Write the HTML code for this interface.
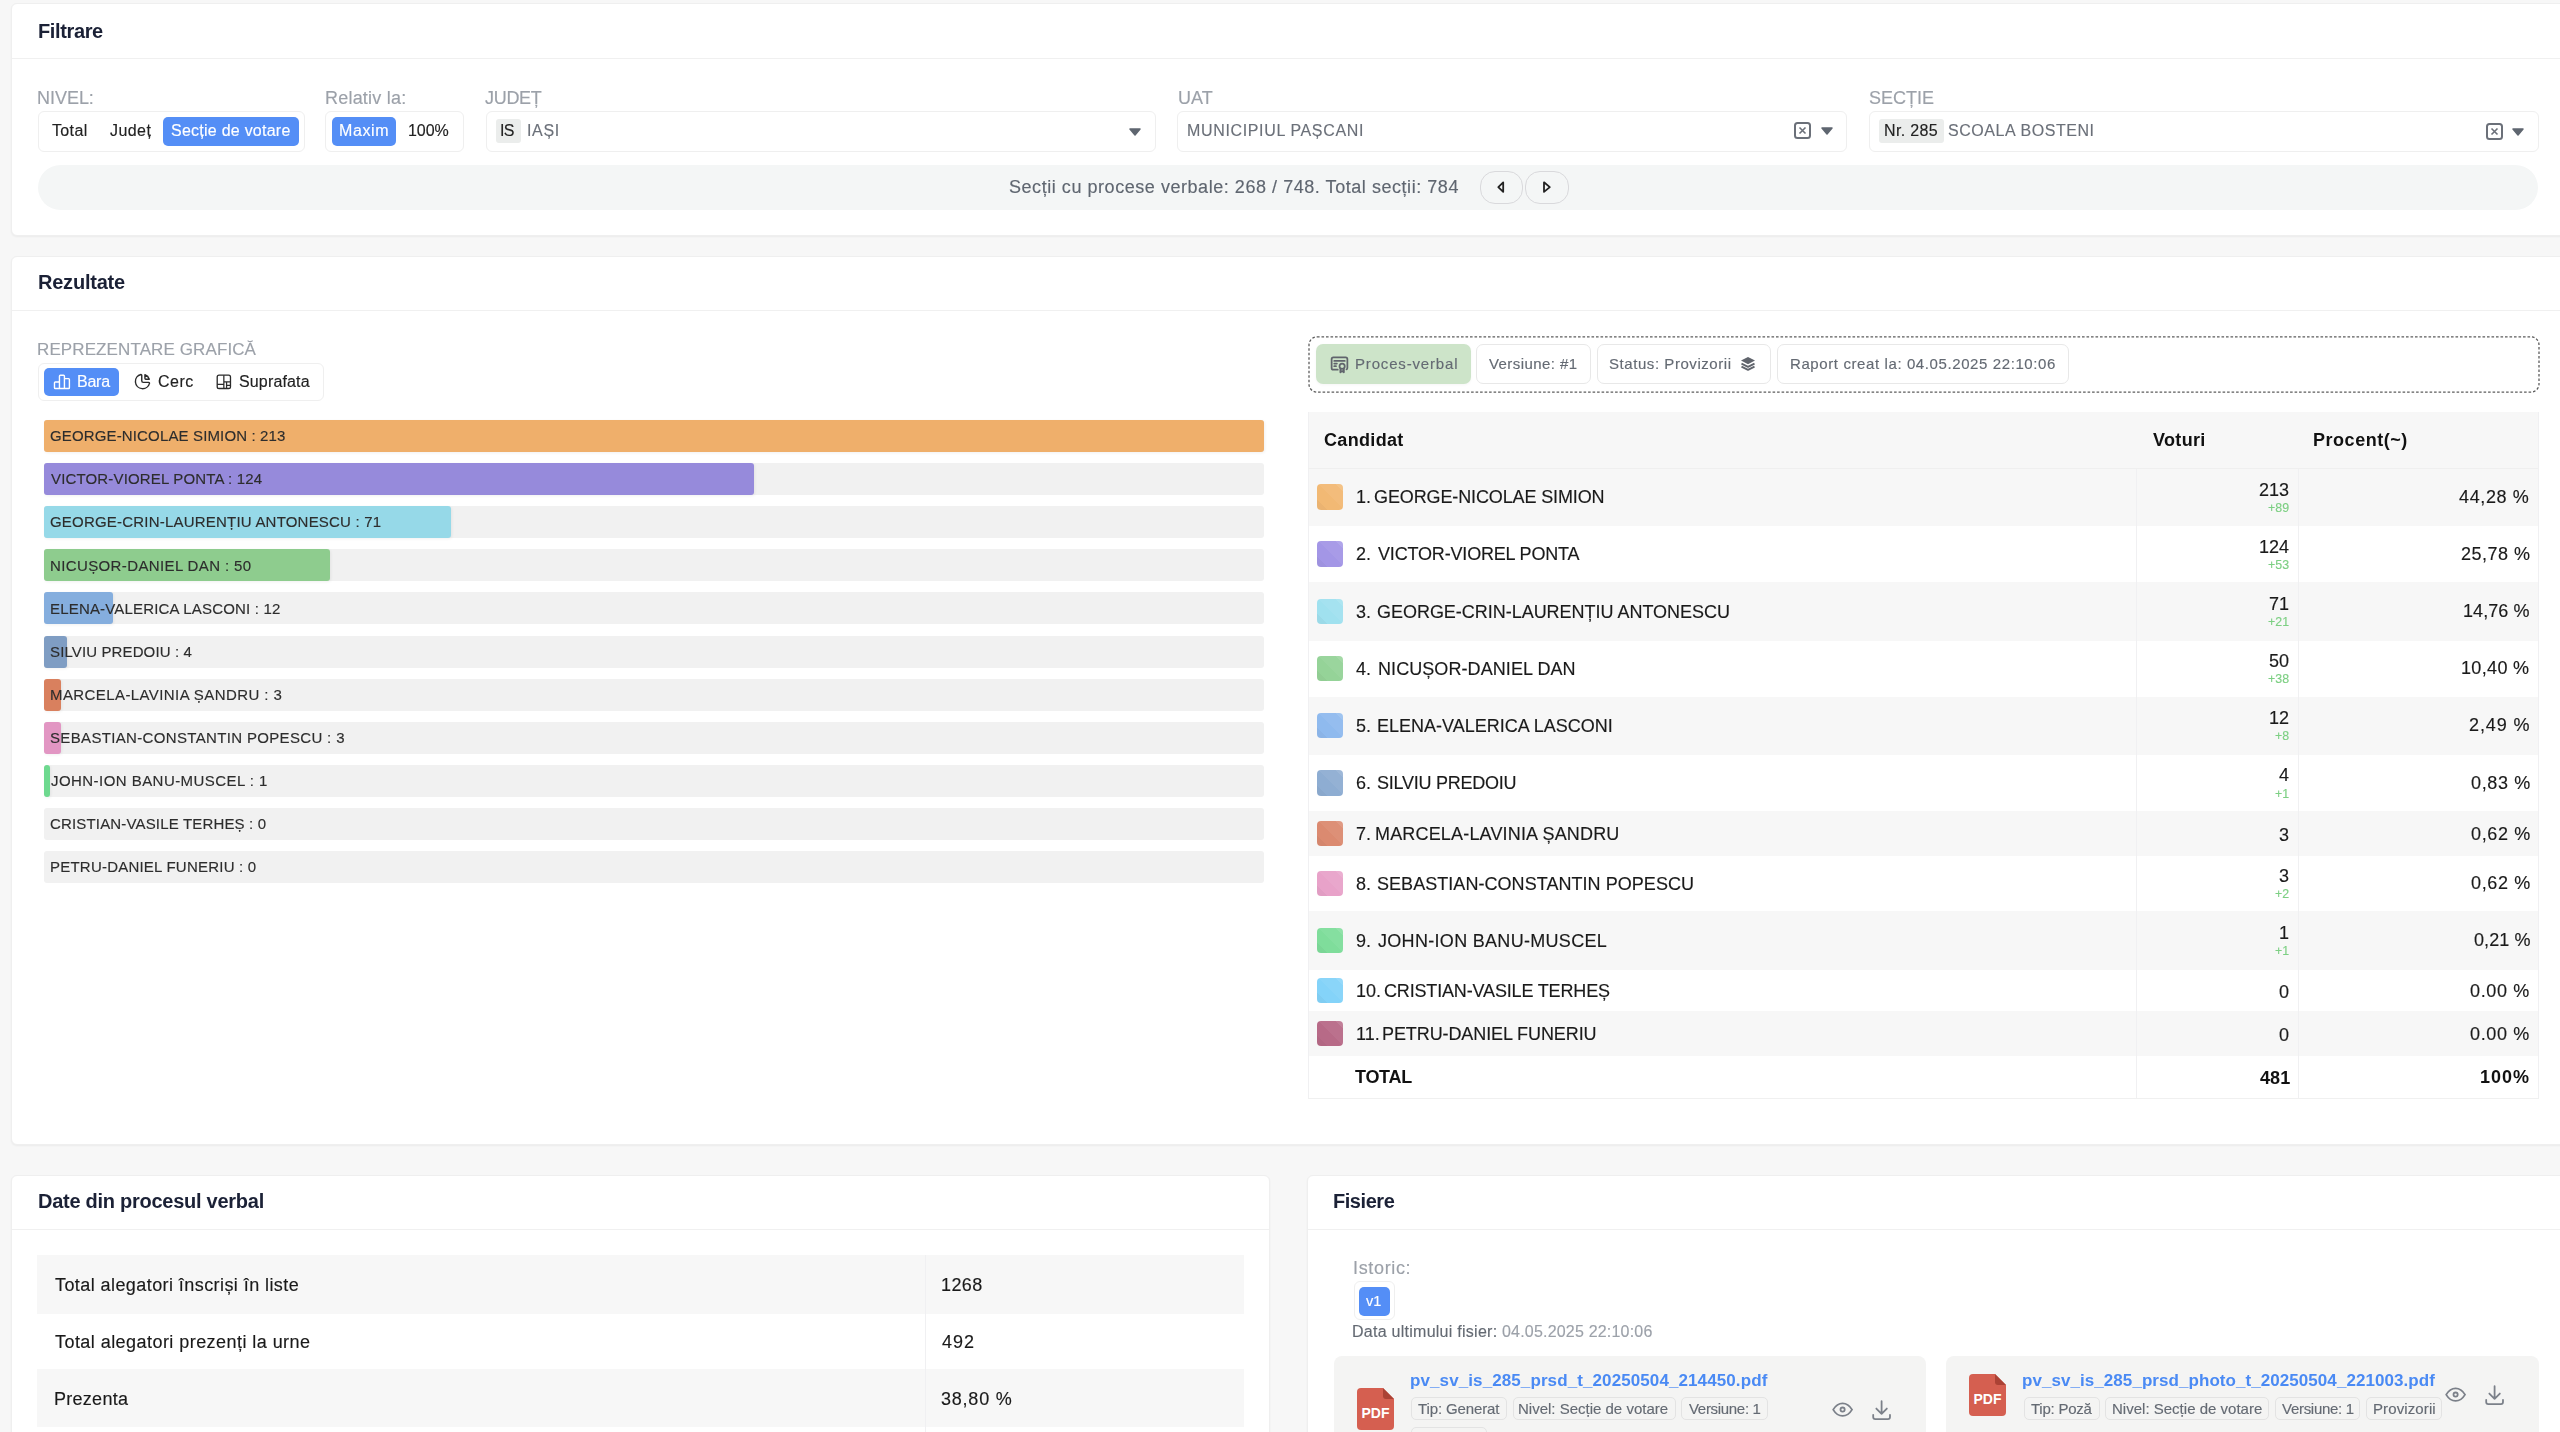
<!DOCTYPE html>
<html><head><meta charset="utf-8"><title>Rezultate</title>
<style>
html,body{margin:0;padding:0;}
body{width:2560px;height:1432px;overflow:hidden;background:#f7f7f7;position:relative;font-family:"Liberation Sans", sans-serif;}
.t{position:absolute;white-space:nowrap;font-family:"Liberation Sans", sans-serif;will-change:transform;-webkit-text-stroke:0.15px currentColor;}
.r{position:absolute;}
</style></head><body>
<div class="r" style="left:11px;top:3.4px;width:2561px;height:233.1px;background:#fff;border:1px solid #efefef;border-radius:6px;box-shadow:0 1px 2px rgba(0,0,0,0.05);box-sizing:border-box"></div>
<div class="r" style="left:12px;top:58px;width:2560px;height:1px;background:#f0f0f0"></div>
<span class="t" style="left:38.10px;top:20.77px;font-size:20px;line-height:20px;font-weight:700;color:#1b2136;letter-spacing:-0.371px;-webkit-text-stroke:0;">Filtrare</span>
<span class="t" style="left:37.25px;top:88.76px;font-size:18px;line-height:18px;font-weight:400;color:#9ca1a9;letter-spacing:-0.030px;">NIVEL:</span>
<span class="t" style="left:325.40px;top:88.76px;font-size:18px;line-height:18px;font-weight:400;color:#9ca1a9;letter-spacing:0.210px;">Relativ la:</span>
<span class="t" style="left:485.30px;top:88.76px;font-size:18px;line-height:18px;font-weight:400;color:#9ca1a9;letter-spacing:-0.300px;">JUDEȚ</span>
<span class="t" style="left:1177.50px;top:88.76px;font-size:18px;line-height:18px;font-weight:400;color:#9ca1a9;letter-spacing:0.000px;">UAT</span>
<span class="t" style="left:1869.00px;top:88.76px;font-size:18px;line-height:18px;font-weight:400;color:#9ca1a9;letter-spacing:0.000px;">SECȚIE</span>
<div class="r" style="left:38px;top:111px;width:267px;height:40.5px;border:1px solid #efefef;border-radius:6px;box-sizing:border-box"></div>
<div class="r" style="left:163px;top:117px;width:136px;height:29px;background:#548ef6;border-radius:5px"></div>
<span class="t" style="left:52.10px;top:122.76px;font-size:16px;line-height:16px;font-weight:400;color:#222;letter-spacing:0.350px;">Total</span>
<span class="t" style="left:109.60px;top:122.76px;font-size:16px;line-height:16px;font-weight:400;color:#222;letter-spacing:0.425px;">Județ</span>
<span class="t" style="left:171.30px;top:122.76px;font-size:16px;line-height:16px;font-weight:400;color:#fff;letter-spacing:0.247px;">Secție de votare</span>
<div class="r" style="left:325px;top:111px;width:139px;height:40.5px;border:1px solid #efefef;border-radius:6px;box-sizing:border-box"></div>
<div class="r" style="left:332px;top:117px;width:64px;height:29px;background:#548ef6;border-radius:5px"></div>
<span class="t" style="left:338.90px;top:122.76px;font-size:16px;line-height:16px;font-weight:400;color:#fff;letter-spacing:0.600px;">Maxim</span>
<span class="t" style="left:408.10px;top:122.76px;font-size:16px;line-height:16px;font-weight:400;color:#222;letter-spacing:-0.033px;">100%</span>
<div class="r" style="left:485.5px;top:111px;width:670.0px;height:40.5px;border:1px solid #efefef;border-radius:6px;box-sizing:border-box"></div>
<div class="r" style="left:496px;top:119px;width:25px;height:24px;background:#ebedec;border-radius:3px"></div>
<span class="t" style="left:500.10px;top:122.76px;font-size:16px;line-height:16px;font-weight:400;color:#222;letter-spacing:-0.600px;">IS</span>
<span class="t" style="left:526.80px;top:122.76px;font-size:16px;line-height:16px;font-weight:400;color:#6b7079;letter-spacing:0.633px;">IAȘI</span>
<svg class="r" style="left:1128.5px;top:127.5px;" width="12" height="8" viewBox="0 0 12 8" fill="none"><path d="M1 1 L11 1 L6 7 Z" fill="#5f6670" stroke="#5f6670" stroke-width="1.5" stroke-linejoin="round"/></svg>
<div class="r" style="left:1176.5px;top:111px;width:670.5px;height:40.5px;border:1px solid #efefef;border-radius:6px;box-sizing:border-box"></div>
<span class="t" style="left:1186.50px;top:122.76px;font-size:16px;line-height:16px;font-weight:400;color:#6b7079;letter-spacing:0.647px;">MUNICIPIUL PAȘCANI</span>
<svg class="r" style="left:1793.5px;top:122px;" width="17" height="17" viewBox="0 0 17 17" fill="none"><rect x="1" y="1" width="15" height="15" rx="2.5" stroke="#6b7079" stroke-width="2"/><path d="M5.5 5.5 L11.5 11.5 M11.5 5.5 L5.5 11.5" stroke="#6b7079" stroke-width="1.6"/></svg>
<svg class="r" style="left:1820.5px;top:127px;" width="12" height="8" viewBox="0 0 12 8" fill="none"><path d="M1 1 L11 1 L6 7 Z" fill="#5f6670" stroke="#5f6670" stroke-width="1.5" stroke-linejoin="round"/></svg>
<div class="r" style="left:1868.5px;top:111px;width:670.0px;height:40.5px;border:1px solid #efefef;border-radius:6px;box-sizing:border-box"></div>
<div class="r" style="left:1879px;top:119px;width:64.5px;height:24px;background:#ebedec;border-radius:3px"></div>
<span class="t" style="left:1884.40px;top:122.76px;font-size:16px;line-height:16px;font-weight:400;color:#222;letter-spacing:0.333px;">Nr. 285</span>
<span class="t" style="left:1948.40px;top:122.76px;font-size:16px;line-height:16px;font-weight:400;color:#6b7079;letter-spacing:0.562px;">SCOALA BOSTENI</span>
<svg class="r" style="left:2485.5px;top:122.5px;" width="17" height="17" viewBox="0 0 17 17" fill="none"><rect x="1" y="1" width="15" height="15" rx="2.5" stroke="#6b7079" stroke-width="2"/><path d="M5.5 5.5 L11.5 11.5 M11.5 5.5 L5.5 11.5" stroke="#6b7079" stroke-width="1.6"/></svg>
<svg class="r" style="left:2512px;top:127.5px;" width="12" height="8" viewBox="0 0 12 8" fill="none"><path d="M1 1 L11 1 L6 7 Z" fill="#5f6670" stroke="#5f6670" stroke-width="1.5" stroke-linejoin="round"/></svg>
<div class="r" style="left:38px;top:165px;width:2500px;height:45px;background:#f4f6f6;border-radius:23px"></div>
<span class="t" style="left:1009.20px;top:178.46px;font-size:18px;line-height:18px;font-weight:400;color:#5f6670;letter-spacing:0.546px;">Secții cu procese verbale: 268 / 748. Total secții: 784</span>
<div class="r" style="left:1480px;top:171px;width:42.5px;height:32.5px;border:1px solid #d9d9dc;border-radius:15px;box-sizing:border-box"></div>
<div class="r" style="left:1525px;top:171px;width:43.5px;height:32.5px;border:1px solid #d9d9dc;border-radius:15px;box-sizing:border-box"></div>
<svg class="r" style="left:1494px;top:179px;" width="14" height="16" viewBox="0 0 14 16" fill="none"><path d="M9.2 3.3 L4.3 8.1 L9.2 12.9 Z" stroke="#222" stroke-width="1.8" stroke-linejoin="round"/></svg>
<svg class="r" style="left:1539px;top:179px;" width="14" height="16" viewBox="0 0 14 16" fill="none"><path d="M5 3.3 L10.8 8.1 L5 12.9 Z" stroke="#222" stroke-width="1.8" stroke-linejoin="round"/></svg>
<div class="r" style="left:11px;top:255.5px;width:2561px;height:889.5px;background:#fff;border:1px solid #efefef;border-radius:6px;box-shadow:0 1px 2px rgba(0,0,0,0.05);box-sizing:border-box"></div>
<div class="r" style="left:12px;top:310px;width:2560px;height:1px;background:#f0f0f0"></div>
<span class="t" style="left:38.10px;top:272.17px;font-size:20px;line-height:20px;font-weight:700;color:#1b2136;letter-spacing:-0.225px;-webkit-text-stroke:0;">Rezultate</span>
<span class="t" style="left:37.30px;top:341.11px;font-size:17px;line-height:17px;font-weight:400;color:#9ca1a9;letter-spacing:0.105px;">REPREZENTARE GRAFICĂ</span>
<div class="r" style="left:38px;top:363px;width:286px;height:38px;border:1px solid #efefef;border-radius:6px;box-sizing:border-box"></div>
<div class="r" style="left:44px;top:368px;width:74.5px;height:28px;background:#548ef6;border-radius:5px"></div>
<svg class="r" style="left:51.9px;top:371.9px;" width="19.9" height="19.9" viewBox="0 0 24 24" fill="none"><path d="M3 13a1 1 0 0 1 1 -1h4a1 1 0 0 1 1 1v6a1 1 0 0 1 -1 1h-4a1 1 0 0 1 -1 -1z M15 9a1 1 0 0 1 1 -1h4a1 1 0 0 1 1 1v10a1 1 0 0 1 -1 1h-4a1 1 0 0 1 -1 -1z M9 5a1 1 0 0 1 1 -1h4a1 1 0 0 1 1 1v14a1 1 0 0 1 -1 1h-4a1 1 0 0 1 -1 -1z" stroke="#fff" stroke-width="1.7" stroke-linejoin="round"/></svg>
<span class="t" style="left:77.00px;top:374.46px;font-size:16px;line-height:16px;font-weight:400;color:#fff;letter-spacing:-0.233px;">Bara</span>
<svg class="r" style="left:132.5px;top:372.2px;" width="19.1" height="19.1" viewBox="0 0 24 24" fill="none"><path d="M10 3.2a9 9 0 1 0 10.8 10.8a1 1 0 0 0 -1 -1h-6.8a2 2 0 0 1 -2 -2v-7a.9 .9 0 0 0 -1 -.8" stroke="#2b2b2b" stroke-width="1.8" stroke-linecap="round" stroke-linejoin="round"/><path d="M15 3.5a9 9 0 0 1 5.5 5.5h-4.5a1 1 0 0 1 -1 -1v-4.5" stroke="#2b2b2b" stroke-width="1.8" stroke-linecap="round" stroke-linejoin="round"/></svg>
<span class="t" style="left:157.60px;top:374.46px;font-size:16px;line-height:16px;font-weight:400;color:#222;letter-spacing:0.467px;">Cerc</span>
<svg class="r" style="left:215px;top:372.7px;" width="17.7" height="17.7" viewBox="0 0 24 24" fill="none"><rect x="3" y="3" width="18" height="18" rx="2.5" stroke="#2b2b2b" stroke-width="1.8"/><path d="M12 3v18 M3 15.6h9 M12 12h9 M15.7 12v9 M15.7 16.8h5.3" stroke="#2b2b2b" stroke-width="1.7"/></svg>
<span class="t" style="left:238.60px;top:374.46px;font-size:16px;line-height:16px;font-weight:400;color:#222;letter-spacing:0.150px;">Suprafata</span>
<div class="r" style="left:44px;top:420.0px;width:1219.5px;height:32.0px;background:#f1f1f1;border-radius:3px"></div>
<div class="r" style="left:44px;top:420.0px;width:1219.5px;height:32.0px;background:#efaf6b;border-radius:3px;box-shadow:1px 1px 3px rgba(0,0,0,0.06)"></div>
<span class="t" style="left:50.20px;top:428.20px;font-size:15px;line-height:15px;font-weight:400;color:#2d2d2d;letter-spacing:0.142px;">GEORGE-NICOLAE SIMION : 213</span>
<div class="r" style="left:44px;top:463.1px;width:1219.5px;height:32.0px;background:#f1f1f1;border-radius:3px"></div>
<div class="r" style="left:44px;top:463.1px;width:709.943661971831px;height:32.0px;background:#968adb;border-radius:3px;box-shadow:1px 1px 3px rgba(0,0,0,0.06)"></div>
<span class="t" style="left:51.20px;top:471.30px;font-size:15px;line-height:15px;font-weight:400;color:#2d2d2d;letter-spacing:0.158px;">VICTOR-VIOREL PONTA : 124</span>
<div class="r" style="left:44px;top:506.2px;width:1219.5px;height:32.00000000000006px;background:#f1f1f1;border-radius:3px"></div>
<div class="r" style="left:44px;top:506.2px;width:406.5px;height:32.00000000000006px;background:#96d9e8;border-radius:3px;box-shadow:1px 1px 3px rgba(0,0,0,0.06)"></div>
<span class="t" style="left:50.20px;top:514.40px;font-size:15px;line-height:15px;font-weight:400;color:#2d2d2d;letter-spacing:0.206px;">GEORGE-CRIN-LAURENȚIU ANTONESCU : 71</span>
<div class="r" style="left:44px;top:549.3px;width:1219.5px;height:32.0px;background:#f1f1f1;border-radius:3px"></div>
<div class="r" style="left:44px;top:549.3px;width:286.2676056338028px;height:32.0px;background:#8ecc8e;border-radius:3px;box-shadow:1px 1px 3px rgba(0,0,0,0.06)"></div>
<span class="t" style="left:50.20px;top:557.50px;font-size:15px;line-height:15px;font-weight:400;color:#2d2d2d;letter-spacing:0.377px;">NICUȘOR-DANIEL DAN : 50</span>
<div class="r" style="left:44px;top:592.4px;width:1219.5px;height:32.0px;background:#f1f1f1;border-radius:3px"></div>
<div class="r" style="left:44px;top:592.4px;width:68.70422535211267px;height:32.0px;background:#85aede;border-radius:3px;box-shadow:1px 1px 3px rgba(0,0,0,0.06)"></div>
<span class="t" style="left:50.20px;top:600.60px;font-size:15px;line-height:15px;font-weight:400;color:#2d2d2d;letter-spacing:0.181px;">ELENA-VALERICA LASCONI : 12</span>
<div class="r" style="left:44px;top:635.5px;width:1219.5px;height:32.0px;background:#f1f1f1;border-radius:3px"></div>
<div class="r" style="left:44px;top:635.5px;width:22.901408450704224px;height:32.0px;background:#7f9dc3;border-radius:3px;box-shadow:1px 1px 3px rgba(0,0,0,0.06)"></div>
<span class="t" style="left:50.20px;top:643.70px;font-size:15px;line-height:15px;font-weight:400;color:#2d2d2d;letter-spacing:0.124px;">SILVIU PREDOIU : 4</span>
<div class="r" style="left:44px;top:678.6px;width:1219.5px;height:32.0px;background:#f1f1f1;border-radius:3px"></div>
<div class="r" style="left:44px;top:678.6px;width:17.176056338028168px;height:32.0px;background:#d9805e;border-radius:3px;box-shadow:1px 1px 3px rgba(0,0,0,0.06)"></div>
<span class="t" style="left:50.20px;top:686.80px;font-size:15px;line-height:15px;font-weight:400;color:#2d2d2d;letter-spacing:0.412px;">MARCELA-LAVINIA ȘANDRU : 3</span>
<div class="r" style="left:44px;top:721.7px;width:1219.5px;height:32.0px;background:#f1f1f1;border-radius:3px"></div>
<div class="r" style="left:44px;top:721.7px;width:17.176056338028168px;height:32.0px;background:#e296c3;border-radius:3px;box-shadow:1px 1px 3px rgba(0,0,0,0.06)"></div>
<span class="t" style="left:50.20px;top:729.90px;font-size:15px;line-height:15px;font-weight:400;color:#2d2d2d;letter-spacing:0.340px;">SEBASTIAN-CONSTANTIN POPESCU : 3</span>
<div class="r" style="left:44px;top:764.8px;width:1219.5px;height:32.0px;background:#f1f1f1;border-radius:3px"></div>
<div class="r" style="left:44px;top:764.8px;width:5.725352112676056px;height:32.0px;background:#6ed98f;border-radius:3px;box-shadow:1px 1px 3px rgba(0,0,0,0.06)"></div>
<span class="t" style="left:51.20px;top:773.00px;font-size:15px;line-height:15px;font-weight:400;color:#2d2d2d;letter-spacing:0.448px;">JOHN-ION BANU-MUSCEL : 1</span>
<div class="r" style="left:44px;top:807.9000000000001px;width:1219.5px;height:32.0px;background:#f1f1f1;border-radius:3px"></div>
<span class="t" style="left:50.20px;top:816.10px;font-size:15px;line-height:15px;font-weight:400;color:#2d2d2d;letter-spacing:0.162px;">CRISTIAN-VASILE TERHEȘ : 0</span>
<div class="r" style="left:44px;top:851.0px;width:1219.5px;height:32.0px;background:#f1f1f1;border-radius:3px"></div>
<span class="t" style="left:50.20px;top:859.20px;font-size:15px;line-height:15px;font-weight:400;color:#2d2d2d;letter-spacing:0.220px;">PETRU-DANIEL FUNERIU : 0</span>
<svg class="r" style="left:1307.5px;top:336px;" width="1232" height="57" viewBox="0 0 1232 57" fill="none"><rect x="1" y="0.9" width="1230" height="55.2" rx="8" stroke="#5c5c5c" stroke-width="1.3" stroke-dasharray="2.6 1.9"/></svg>
<div class="r" style="left:1316px;top:344px;width:154.5px;height:40px;background:#cde4c9;border-radius:7px;box-shadow:0 1px 3px rgba(0,0,0,0.04)"></div>
<svg class="r" style="left:1328.5px;top:353px;" width="21" height="21" viewBox="0 0 24 24" fill="none"><path d="M12 15a3 3 0 1 0 6 0a3 3 0 1 0 -6 0 M13 17.5v4.5l2 -1.5l2 1.5v-4.5 M10 19h-5a2 2 0 0 1 -2 -2v-10c0 -1.1 .9 -2 2 -2h14a2 2 0 0 1 2 2v10a2 2 0 0 1 -1 1.73 M6 9l12 0 M6 12l3 0 M6 15l2 0" stroke="#60646c" stroke-width="2" stroke-linecap="round" stroke-linejoin="round"/></svg>
<span class="t" style="left:1355.00px;top:356.20px;font-size:15px;line-height:15px;font-weight:400;color:#646a73;letter-spacing:0.833px;">Proces-verbal</span>
<div class="r" style="left:1475.5px;top:344px;width:115.0px;height:40px;background:#fff;border:1px solid #e8e8e8;border-radius:7px;box-sizing:border-box"></div>
<span class="t" style="left:1489.10px;top:356.20px;font-size:15px;line-height:15px;font-weight:400;color:#646a73;letter-spacing:0.418px;">Versiune: #1</span>
<div class="r" style="left:1596.5px;top:344px;width:174.0px;height:40px;background:#fff;border:1px solid #e8e8e8;border-radius:7px;box-sizing:border-box"></div>
<span class="t" style="left:1609.00px;top:356.20px;font-size:15px;line-height:15px;font-weight:400;color:#646a73;letter-spacing:0.559px;">Status: Provizorii</span>
<svg class="r" style="left:1740px;top:355.5px;" width="16" height="15" viewBox="0 0 16 15" fill="none"><path d="M8 1 L15 4.6 L8 8.2 L1 4.6 Z" fill="#60646c"/><path d="M1.5 7.6 L8 10.9 L14.5 7.6" stroke="#60646c" stroke-width="1.8" stroke-linejoin="round"/><path d="M1.5 10.6 L8 13.9 L14.5 10.6" stroke="#60646c" stroke-width="1.8" stroke-linejoin="round"/></svg>
<div class="r" style="left:1777px;top:344px;width:291.5px;height:40px;background:#fff;border:1px solid #e8e8e8;border-radius:7px;box-sizing:border-box"></div>
<span class="t" style="left:1789.60px;top:356.20px;font-size:15px;line-height:15px;font-weight:400;color:#646a73;letter-spacing:0.600px;">Raport creat la: 04.05.2025 22:10:06</span>
<div class="r" style="left:1308px;top:411.7px;width:1231px;height:56.60000000000002px;background:#f7f7f7"></div>
<span class="t" style="left:1323.80px;top:430.86px;font-size:18px;line-height:18px;font-weight:700;color:#111;letter-spacing:0.329px;-webkit-text-stroke:0;">Candidat</span>
<span class="t" style="left:2152.60px;top:430.86px;font-size:18px;line-height:18px;font-weight:700;color:#111;letter-spacing:0.340px;-webkit-text-stroke:0;">Voturi</span>
<span class="t" style="left:2313.00px;top:430.86px;font-size:18px;line-height:18px;font-weight:700;color:#111;letter-spacing:0.533px;-webkit-text-stroke:0;">Procent(~)</span>
<div class="r" style="left:1308px;top:468.3px;width:1231px;height:57.69999999999999px;background:#f7f7f7"></div>
<div class="r" style="left:1308px;top:526px;width:1231px;height:56.299999999999955px;background:#ffffff"></div>
<div class="r" style="left:1308px;top:582.3px;width:1231px;height:58.40000000000009px;background:#f7f7f7"></div>
<div class="r" style="left:1308px;top:640.7px;width:1231px;height:56.0px;background:#ffffff"></div>
<div class="r" style="left:1308px;top:696.7px;width:1231px;height:58.09999999999991px;background:#f7f7f7"></div>
<div class="r" style="left:1308px;top:754.8px;width:1231px;height:56.200000000000045px;background:#ffffff"></div>
<div class="r" style="left:1308px;top:811px;width:1231px;height:45px;background:#f7f7f7"></div>
<div class="r" style="left:1308px;top:856px;width:1231px;height:55px;background:#ffffff"></div>
<div class="r" style="left:1308px;top:911px;width:1231px;height:58.799999999999955px;background:#f7f7f7"></div>
<div class="r" style="left:1308px;top:969.8px;width:1231px;height:41.40000000000009px;background:#ffffff"></div>
<div class="r" style="left:1308px;top:1011.2px;width:1231px;height:44.399999999999864px;background:#f7f7f7"></div>
<div class="r" style="left:1308px;top:1055.6px;width:1231px;height:42.100000000000136px;background:#ffffff"></div>
<div class="r" style="left:1308px;top:411.7px;width:1px;height:686.0px;background:#f0f0f2"></div>
<div class="r" style="left:2136px;top:468.3px;width:1px;height:629.4000000000001px;background:#f0f0f2"></div>
<div class="r" style="left:2297.5px;top:468.3px;width:1.0px;height:629.4000000000001px;background:#f0f0f2"></div>
<div class="r" style="left:1308px;top:468px;width:1231px;height:1px;background:#efefef"></div>
<div class="r" style="left:2538px;top:411.7px;width:1px;height:686.0px;background:#f0f0f2"></div>
<div class="r" style="left:1308px;top:1097.7px;width:1231px;height:1.0px;background:#f0f0f0"></div>
<div class="r" style="left:1317px;top:484.45px;width:25.59999999999991px;height:25.399999999999977px;background:linear-gradient(45deg,#ebb371 0 20%,#f2b974 20% 52%,#f3bc7b 52% 86%,#f4c387 86%);border-radius:4px"></div>
<span class="t" style="left:1355.50px;top:488.31px;font-size:18px;line-height:18px;font-weight:400;color:#1a1a1a;letter-spacing:0.000px;">1.</span>
<span class="t" style="left:1373.60px;top:488.31px;font-size:18px;line-height:18px;font-weight:400;color:#1a1a1a;letter-spacing:-0.125px;">GEORGE-NICOLAE SIMION</span>
<span class="t" style="right:271.00px;top:480.71px;font-size:18px;line-height:18px;font-weight:400;color:#1a1a1a;letter-spacing:0.000px;">213</span>
<span class="t" style="right:271.00px;top:501.75px;font-size:12.4px;line-height:12.4px;font-weight:400;color:#7dcf83;letter-spacing:0.000px;">+89</span>
<span class="t" style="right:30.97px;top:487.81px;font-size:18px;line-height:18px;font-weight:400;color:#1a1a1a;letter-spacing:0.633px;">44,28 %</span>
<div class="r" style="left:1317px;top:541.4499999999999px;width:25.59999999999991px;height:25.40000000000009px;background:linear-gradient(45deg,#9e92df 0 20%,#a396e6 20% 52%,#a89be7 52% 86%,#b0a5ea 86%);border-radius:4px"></div>
<span class="t" style="left:1355.50px;top:545.31px;font-size:18px;line-height:18px;font-weight:400;color:#1a1a1a;letter-spacing:0.000px;">2.</span>
<span class="t" style="left:1378.20px;top:545.31px;font-size:18px;line-height:18px;font-weight:400;color:#1a1a1a;letter-spacing:-0.172px;">VICTOR-VIOREL PONTA</span>
<span class="t" style="right:271.00px;top:537.71px;font-size:18px;line-height:18px;font-weight:400;color:#1a1a1a;letter-spacing:0.000px;">124</span>
<span class="t" style="right:271.00px;top:558.75px;font-size:12.4px;line-height:12.4px;font-weight:400;color:#7dcf83;letter-spacing:0.000px;">+53</span>
<span class="t" style="right:30.12px;top:544.81px;font-size:18px;line-height:18px;font-weight:400;color:#1a1a1a;letter-spacing:0.475px;">25,78 %</span>
<div class="r" style="left:1317px;top:598.8px;width:25.59999999999991px;height:25.40000000000009px;background:linear-gradient(45deg,#9bdae8 0 20%,#a0e1ef 20% 52%,#a5e2f0 52% 86%,#ade5f1 86%);border-radius:4px"></div>
<span class="t" style="left:1355.50px;top:602.66px;font-size:18px;line-height:18px;font-weight:400;color:#1a1a1a;letter-spacing:0.000px;">3.</span>
<span class="t" style="left:1377.00px;top:602.66px;font-size:18px;line-height:18px;font-weight:400;color:#1a1a1a;letter-spacing:-0.027px;">GEORGE-CRIN-LAURENȚIU ANTONESCU</span>
<span class="t" style="right:271.00px;top:595.06px;font-size:18px;line-height:18px;font-weight:400;color:#1a1a1a;letter-spacing:0.000px;">71</span>
<span class="t" style="right:271.00px;top:616.10px;font-size:12.4px;line-height:12.4px;font-weight:400;color:#7dcf83;letter-spacing:0.000px;">+21</span>
<span class="t" style="right:30.55px;top:602.16px;font-size:18px;line-height:18px;font-weight:400;color:#1a1a1a;letter-spacing:0.056px;">14,76 %</span>
<div class="r" style="left:1317px;top:656.0px;width:25.59999999999991px;height:25.40000000000009px;background:linear-gradient(45deg,#91cd93 0 20%,#95d398 20% 52%,#9ad59d 52% 86%,#a4d9a6 86%);border-radius:4px"></div>
<span class="t" style="left:1355.50px;top:659.86px;font-size:18px;line-height:18px;font-weight:400;color:#1a1a1a;letter-spacing:0.000px;">4.</span>
<span class="t" style="left:1377.50px;top:659.86px;font-size:18px;line-height:18px;font-weight:400;color:#1a1a1a;letter-spacing:0.074px;">NICUȘOR-DANIEL DAN</span>
<span class="t" style="right:271.00px;top:652.26px;font-size:18px;line-height:18px;font-weight:400;color:#1a1a1a;letter-spacing:0.000px;">50</span>
<span class="t" style="right:271.00px;top:673.30px;font-size:12.4px;line-height:12.4px;font-weight:400;color:#7dcf83;letter-spacing:0.000px;">+38</span>
<span class="t" style="right:30.43px;top:659.36px;font-size:18px;line-height:18px;font-weight:400;color:#1a1a1a;letter-spacing:0.337px;">10,40 %</span>
<div class="r" style="left:1317px;top:713.05px;width:25.59999999999991px;height:25.40000000000009px;background:linear-gradient(45deg,#8bb4e7 0 20%,#8fbaee 20% 52%,#95bdef 52% 86%,#9fc4f0 86%);border-radius:4px"></div>
<span class="t" style="left:1355.50px;top:716.91px;font-size:18px;line-height:18px;font-weight:400;color:#1a1a1a;letter-spacing:0.000px;">5.</span>
<span class="t" style="left:1377.00px;top:716.91px;font-size:18px;line-height:18px;font-weight:400;color:#1a1a1a;letter-spacing:0.000px;">ELENA-VALERICA LASCONI</span>
<span class="t" style="right:271.00px;top:709.31px;font-size:18px;line-height:18px;font-weight:400;color:#1a1a1a;letter-spacing:0.000px;">12</span>
<span class="t" style="right:271.00px;top:730.35px;font-size:12.4px;line-height:12.4px;font-weight:400;color:#7dcf83;letter-spacing:0.000px;">+8</span>
<span class="t" style="right:29.90px;top:716.41px;font-size:18px;line-height:18px;font-weight:400;color:#1a1a1a;letter-spacing:0.872px;">2,49 %</span>
<div class="r" style="left:1317px;top:770.1999999999999px;width:25.59999999999991px;height:25.40000000000009px;background:linear-gradient(45deg,#8aa8cc 0 20%,#8eadd2 20% 52%,#94b1d4 52% 86%,#9eb8d8 86%);border-radius:4px"></div>
<span class="t" style="left:1355.50px;top:774.06px;font-size:18px;line-height:18px;font-weight:400;color:#1a1a1a;letter-spacing:0.000px;">6.</span>
<span class="t" style="left:1377.40px;top:774.06px;font-size:18px;line-height:18px;font-weight:400;color:#1a1a1a;letter-spacing:-0.246px;">SILVIU PREDOIU</span>
<span class="t" style="right:271.00px;top:766.46px;font-size:18px;line-height:18px;font-weight:400;color:#1a1a1a;letter-spacing:0.000px;">4</span>
<span class="t" style="right:271.00px;top:787.50px;font-size:12.4px;line-height:12.4px;font-weight:400;color:#7dcf83;letter-spacing:0.000px;">+1</span>
<span class="t" style="right:29.11px;top:773.56px;font-size:18px;line-height:18px;font-weight:400;color:#1a1a1a;letter-spacing:0.638px;">0,83 %</span>
<div class="r" style="left:1317px;top:820.8px;width:25.59999999999991px;height:25.40000000000009px;background:linear-gradient(45deg,#d4866d 0 20%,#db8a70 20% 52%,#dd9077 52% 86%,#e09a84 86%);border-radius:4px"></div>
<span class="t" style="left:1355.50px;top:824.66px;font-size:18px;line-height:18px;font-weight:400;color:#1a1a1a;letter-spacing:0.000px;">7.</span>
<span class="t" style="left:1374.80px;top:824.66px;font-size:18px;line-height:18px;font-weight:400;color:#1a1a1a;letter-spacing:0.171px;">MARCELA-LAVINIA ȘANDRU</span>
<span class="t" style="right:271.00px;top:826.26px;font-size:18px;line-height:18px;font-weight:400;color:#1a1a1a;letter-spacing:0.000px;">3</span>
<span class="t" style="right:29.11px;top:825.26px;font-size:18px;line-height:18px;font-weight:400;color:#1a1a1a;letter-spacing:0.638px;">0,62 %</span>
<div class="r" style="left:1317px;top:870.8px;width:25.59999999999991px;height:25.40000000000009px;background:linear-gradient(45deg,#e19dc3 0 20%,#e8a2c9 20% 52%,#e9a7cc 52% 86%,#ebafd1 86%);border-radius:4px"></div>
<span class="t" style="left:1355.50px;top:874.66px;font-size:18px;line-height:18px;font-weight:400;color:#1a1a1a;letter-spacing:0.000px;">8.</span>
<span class="t" style="left:1377.40px;top:874.66px;font-size:18px;line-height:18px;font-weight:400;color:#1a1a1a;letter-spacing:0.048px;">SEBASTIAN-CONSTANTIN POPESCU</span>
<span class="t" style="right:271.00px;top:867.06px;font-size:18px;line-height:18px;font-weight:400;color:#1a1a1a;letter-spacing:0.000px;">3</span>
<span class="t" style="right:271.00px;top:888.10px;font-size:12.4px;line-height:12.4px;font-weight:400;color:#7dcf83;letter-spacing:0.000px;">+2</span>
<span class="t" style="right:29.11px;top:874.16px;font-size:18px;line-height:18px;font-weight:400;color:#1a1a1a;letter-spacing:0.638px;">0,62 %</span>
<div class="r" style="left:1317px;top:927.6999999999999px;width:25.59999999999991px;height:25.40000000000009px;background:linear-gradient(45deg,#7bd696 0 20%,#7fdd9b 20% 52%,#85dfa0 52% 86%,#91e2a9 86%);border-radius:4px"></div>
<span class="t" style="left:1355.50px;top:931.56px;font-size:18px;line-height:18px;font-weight:400;color:#1a1a1a;letter-spacing:0.000px;">9.</span>
<span class="t" style="left:1378.40px;top:931.56px;font-size:18px;line-height:18px;font-weight:400;color:#1a1a1a;letter-spacing:0.305px;">JOHN-ION BANU-MUSCEL</span>
<span class="t" style="right:271.00px;top:923.96px;font-size:18px;line-height:18px;font-weight:400;color:#1a1a1a;letter-spacing:0.000px;">1</span>
<span class="t" style="right:271.00px;top:945.00px;font-size:12.4px;line-height:12.4px;font-weight:400;color:#7dcf83;letter-spacing:0.000px;">+1</span>
<span class="t" style="right:29.68px;top:931.06px;font-size:18px;line-height:18px;font-weight:400;color:#1a1a1a;letter-spacing:0.072px;">0,21 %</span>
<div class="r" style="left:1317px;top:977.8px;width:25.59999999999991px;height:25.40000000000009px;background:linear-gradient(45deg,#80cdf2 0 20%,#84d3f9 20% 52%,#8ad5f9 52% 86%,#95d9fa 86%);border-radius:4px"></div>
<span class="t" style="left:1355.50px;top:981.66px;font-size:18px;line-height:18px;font-weight:400;color:#1a1a1a;letter-spacing:0.000px;">10.</span>
<span class="t" style="left:1384.40px;top:981.66px;font-size:18px;line-height:18px;font-weight:400;color:#1a1a1a;letter-spacing:-0.162px;">CRISTIAN-VASILE TERHEȘ</span>
<span class="t" style="right:271.00px;top:983.26px;font-size:18px;line-height:18px;font-weight:400;color:#1a1a1a;letter-spacing:0.000px;">0</span>
<span class="t" style="right:30.14px;top:982.26px;font-size:18px;line-height:18px;font-weight:400;color:#1a1a1a;letter-spacing:0.660px;">0.00 %</span>
<div class="r" style="left:1317px;top:1020.7px;width:25.59999999999991px;height:25.40000000000009px;background:linear-gradient(45deg,#b26783 0 20%,#b76a87 20% 52%,#bb718d 52% 86%,#c17f98 86%);border-radius:4px"></div>
<span class="t" style="left:1355.50px;top:1024.56px;font-size:18px;line-height:18px;font-weight:400;color:#1a1a1a;letter-spacing:0.000px;">11.</span>
<span class="t" style="left:1381.60px;top:1024.56px;font-size:18px;line-height:18px;font-weight:400;color:#1a1a1a;letter-spacing:-0.095px;">PETRU-DANIEL FUNERIU</span>
<span class="t" style="right:271.00px;top:1026.16px;font-size:18px;line-height:18px;font-weight:400;color:#1a1a1a;letter-spacing:0.000px;">0</span>
<span class="t" style="right:30.14px;top:1025.16px;font-size:18px;line-height:18px;font-weight:400;color:#1a1a1a;letter-spacing:0.660px;">0.00 %</span>
<span class="t" style="left:1355.40px;top:1068.26px;font-size:18px;line-height:18px;font-weight:700;color:#111;letter-spacing:-0.275px;-webkit-text-stroke:0;">TOTAL</span>
<span class="t" style="right:269.90px;top:1069.36px;font-size:18px;line-height:18px;font-weight:700;color:#111;letter-spacing:0.100px;-webkit-text-stroke:0;">481</span>
<span class="t" style="right:29.80px;top:1067.96px;font-size:18px;line-height:18px;font-weight:700;color:#111;letter-spacing:1.000px;-webkit-text-stroke:0;">100%</span>
<div class="r" style="left:11px;top:1174.5px;width:1258.5px;height:325.5px;background:#fff;border:1px solid #efefef;border-radius:6px;box-shadow:0 1px 2px rgba(0,0,0,0.05);box-sizing:border-box"></div>
<div class="r" style="left:12px;top:1228.5px;width:1257px;height:1.0px;background:#f0f0f0"></div>
<span class="t" style="left:38.10px;top:1190.57px;font-size:20px;line-height:20px;font-weight:700;color:#1b2136;letter-spacing:-0.265px;-webkit-text-stroke:0;">Date din procesul verbal</span>
<div class="r" style="left:37px;top:1255px;width:1207px;height:58.90000000000009px;background:#f7f7f7"></div>
<span class="t" style="left:55.20px;top:1276.01px;font-size:18px;line-height:18px;font-weight:400;color:#1a1a1a;letter-spacing:0.425px;">Total alegatori înscriși în liste</span>
<span class="t" style="left:941.00px;top:1276.01px;font-size:18px;line-height:18px;font-weight:400;color:#1a1a1a;letter-spacing:0.367px;">1268</span>
<div class="r" style="left:37px;top:1313.9px;width:1207px;height:55.299999999999955px;background:#ffffff"></div>
<span class="t" style="left:55.20px;top:1333.11px;font-size:18px;line-height:18px;font-weight:400;color:#1a1a1a;letter-spacing:0.448px;">Total alegatori prezenți la urne</span>
<span class="t" style="left:942.00px;top:1333.11px;font-size:18px;line-height:18px;font-weight:400;color:#1a1a1a;letter-spacing:1.000px;">492</span>
<div class="r" style="left:37px;top:1369.2px;width:1207px;height:57.799999999999955px;background:#f7f7f7"></div>
<span class="t" style="left:54.20px;top:1389.66px;font-size:18px;line-height:18px;font-weight:400;color:#1a1a1a;letter-spacing:0.271px;">Prezenta</span>
<span class="t" style="left:941.00px;top:1389.66px;font-size:18px;line-height:18px;font-weight:400;color:#1a1a1a;letter-spacing:0.783px;">38,80 %</span>
<div class="r" style="left:37px;top:1427px;width:1207px;height:58px;background:#ffffff"></div>
<div class="r" style="left:925px;top:1255px;width:1px;height:245px;background:#f0f0f2"></div>
<div class="r" style="left:1307px;top:1174.5px;width:1265px;height:325.5px;background:#fff;border:1px solid #efefef;border-radius:6px;box-shadow:0 1px 2px rgba(0,0,0,0.05);box-sizing:border-box"></div>
<div class="r" style="left:1308px;top:1228.5px;width:1264px;height:1.0px;background:#f0f0f0"></div>
<span class="t" style="left:1333.20px;top:1190.77px;font-size:20px;line-height:20px;font-weight:700;color:#1b2136;letter-spacing:-0.450px;-webkit-text-stroke:0;">Fisiere</span>
<span class="t" style="left:1352.60px;top:1258.76px;font-size:18px;line-height:18px;font-weight:400;color:#9ca1a9;letter-spacing:0.657px;">Istoric:</span>
<div class="r" style="left:1353.5px;top:1281px;width:41.0px;height:39px;border:1px solid #efefef;border-radius:6px;box-sizing:border-box"></div>
<div class="r" style="left:1358.5px;top:1287px;width:31.0px;height:29px;background:#548ef6;border-radius:5px"></div>
<span class="t" style="left:1366.20px;top:1293.73px;font-size:14.5px;line-height:14.5px;font-weight:400;color:#fff;letter-spacing:0.000px;">v1</span>
<span class="t" style="left:1352.00px;top:1323.76px;font-size:16px;line-height:16px;font-weight:400;color:#646a73;letter-spacing:0.262px;">Data ultimului fisier:</span>
<span class="t" style="left:1501.60px;top:1323.76px;font-size:16px;line-height:16px;font-weight:400;color:#9ca1a9;letter-spacing:0.194px;">04.05.2025 22:10:06</span>
<div class="r" style="left:1334px;top:1355.7px;width:591.5px;height:144.29999999999995px;background:#f4f4f3;border-radius:8px"></div>
<svg class="r" style="left:1356.6px;top:1388px;" width="37" height="42" viewBox="0 0 37 42" fill="none"><path d="M4 0 H26 L37 11 V38 a4 4 0 0 1 -4 4 H4 a4 4 0 0 1 -4 -4 V4 a4 4 0 0 1 4 -4 Z" fill="#d55f50"/><path d="M26 0 L37 11 H29 a3 3 0 0 1 -3 -3 Z" fill="#ab4235"/><text x="18.5" y="30" text-anchor="middle" font-family="Liberation Sans" font-weight="700" font-size="14" fill="#fff">PDF</text></svg>
<span class="t" style="left:1409.60px;top:1371.61px;font-size:17px;line-height:17px;font-weight:600;color:#4a8af4;letter-spacing:0.100px;-webkit-text-stroke:0;">pv_sv_is_285_prsd_t_20250504_214450.pdf</span>
<div class="r" style="left:1410.8px;top:1397.4px;width:96.20000000000005px;height:23.0px;border:1px solid #e3e3e3;border-radius:5px;box-sizing:border-box"></div>
<span class="t" style="left:1417.90px;top:1401.20px;font-size:15px;line-height:15px;font-weight:400;color:#646a73;letter-spacing:-0.127px;">Tip: Generat</span>
<div class="r" style="left:1512.5px;top:1397.4px;width:163.5px;height:23.0px;border:1px solid #e3e3e3;border-radius:5px;box-sizing:border-box"></div>
<span class="t" style="left:1518.30px;top:1401.20px;font-size:15px;line-height:15px;font-weight:400;color:#646a73;letter-spacing:0.000px;">Nivel: Secție de votare</span>
<div class="r" style="left:1681.3px;top:1397.4px;width:86.29999999999995px;height:23.0px;border:1px solid #e3e3e3;border-radius:5px;box-sizing:border-box"></div>
<span class="t" style="left:1689.20px;top:1401.20px;font-size:15px;line-height:15px;font-weight:400;color:#646a73;letter-spacing:-0.310px;">Versiune: 1</span>
<div class="r" style="left:1410.8px;top:1426.5px;width:76.20000000000005px;height:23.0px;border:1px solid #e3e3e3;border-radius:5px;box-sizing:border-box"></div>
<span class="t" style="left:1418.80px;top:1430.30px;font-size:15px;line-height:15px;font-weight:400;color:#646a73;letter-spacing:0.000px;">Provizorii</span>
<svg class="r" style="left:1830.3px;top:1396.6px;" width="25.2" height="25.2" viewBox="0 0 24 24" fill="none"><path d="M10 12a2 2 0 1 0 4 0a2 2 0 0 0 -4 0 M21 12c-2.4 4 -5.4 6 -9 6c-3.6 0 -6.6 -2 -9 -6c2.4 -4 5.4 -6 9 -6c3.6 0 6.6 2 9 6" stroke="#7b8089" stroke-width="1.7" stroke-linecap="round" stroke-linejoin="round"/></svg>
<svg class="r" style="left:1868.5px;top:1396.8px;" width="25.2" height="25.2" viewBox="0 0 24 24" fill="none"><path d="M4 17v2a2 2 0 0 0 2 2h12a2 2 0 0 0 2 -2v-2 M7 11l5 5l5 -5 M12 4l0 12" stroke="#7b8089" stroke-width="1.7" stroke-linecap="round" stroke-linejoin="round"/></svg>
<div class="r" style="left:1946px;top:1355.7px;width:593.4000000000001px;height:144.29999999999995px;background:#f4f4f3;border-radius:8px"></div>
<svg class="r" style="left:1969px;top:1374px;" width="37" height="42" viewBox="0 0 37 42" fill="none"><path d="M4 0 H26 L37 11 V38 a4 4 0 0 1 -4 4 H4 a4 4 0 0 1 -4 -4 V4 a4 4 0 0 1 4 -4 Z" fill="#d55f50"/><path d="M26 0 L37 11 H29 a3 3 0 0 1 -3 -3 Z" fill="#ab4235"/><text x="18.5" y="30" text-anchor="middle" font-family="Liberation Sans" font-weight="700" font-size="14" fill="#fff">PDF</text></svg>
<span class="t" style="left:2022.20px;top:1371.61px;font-size:17px;line-height:17px;font-weight:600;color:#4a8af4;letter-spacing:0.061px;-webkit-text-stroke:0;">pv_sv_is_285_prsd_photo_t_20250504_221003.pdf</span>
<div class="r" style="left:2023.6px;top:1397.4px;width:76.20000000000027px;height:23.0px;border:1px solid #e3e3e3;border-radius:5px;box-sizing:border-box"></div>
<span class="t" style="left:2031.10px;top:1401.20px;font-size:15px;line-height:15px;font-weight:400;color:#646a73;letter-spacing:-0.238px;">Tip: Poză</span>
<div class="r" style="left:2105.4px;top:1397.4px;width:163.19999999999982px;height:23.0px;border:1px solid #e3e3e3;border-radius:5px;box-sizing:border-box"></div>
<span class="t" style="left:2111.80px;top:1401.20px;font-size:15px;line-height:15px;font-weight:400;color:#646a73;letter-spacing:0.009px;">Nivel: Secție de votare</span>
<div class="r" style="left:2275.4px;top:1397.4px;width:84.79999999999973px;height:23.0px;border:1px solid #e3e3e3;border-radius:5px;box-sizing:border-box"></div>
<span class="t" style="left:2282.40px;top:1401.20px;font-size:15px;line-height:15px;font-weight:400;color:#646a73;letter-spacing:-0.290px;">Versiune: 1</span>
<div class="r" style="left:2366.3px;top:1397.4px;width:75.5px;height:23.0px;border:1px solid #e3e3e3;border-radius:5px;box-sizing:border-box"></div>
<span class="t" style="left:2372.80px;top:1401.20px;font-size:15px;line-height:15px;font-weight:400;color:#646a73;letter-spacing:0.111px;">Provizorii</span>
<svg class="r" style="left:2443.1px;top:1382.2px;" width="25.2" height="25.2" viewBox="0 0 24 24" fill="none"><path d="M10 12a2 2 0 1 0 4 0a2 2 0 0 0 -4 0 M21 12c-2.4 4 -5.4 6 -9 6c-3.6 0 -6.6 -2 -9 -6c2.4 -4 5.4 -6 9 -6c3.6 0 6.6 2 9 6" stroke="#7b8089" stroke-width="1.7" stroke-linecap="round" stroke-linejoin="round"/></svg>
<svg class="r" style="left:2481.6px;top:1382.3px;" width="25.2" height="25.2" viewBox="0 0 24 24" fill="none"><path d="M4 17v2a2 2 0 0 0 2 2h12a2 2 0 0 0 2 -2v-2 M7 11l5 5l5 -5 M12 4l0 12" stroke="#7b8089" stroke-width="1.7" stroke-linecap="round" stroke-linejoin="round"/></svg>
</body></html>
